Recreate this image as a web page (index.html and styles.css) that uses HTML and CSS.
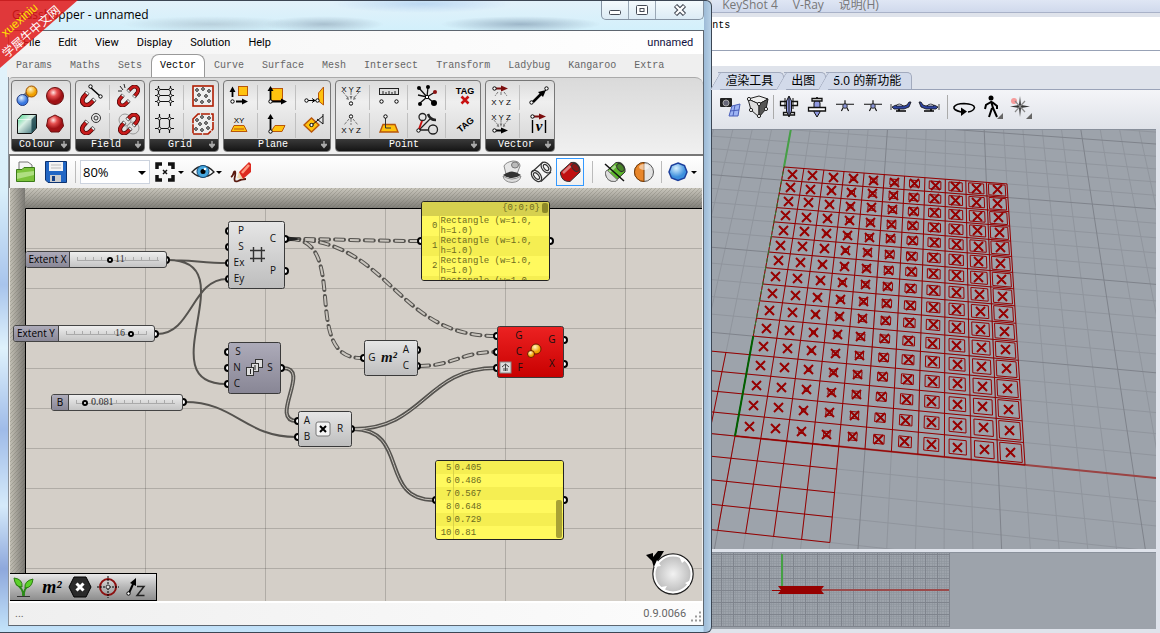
FILE: index.html
```html
<!DOCTYPE html>
<html lang="zh-CN">
<head>
<meta charset="utf-8">
<title>Grasshopper - unnamed</title>
<link rel="stylesheet" href="styles.css">
</head>
<body>
<svg class="defs" aria-hidden="true">
  <defs>
    <radialGradient id="gRed" cx=".4" cy=".3"><stop offset="0" stop-color="#ffe6e4"/><stop offset=".45" stop-color="#e65050"/><stop offset="1" stop-color="#a01216"/></radialGradient>
    <radialGradient id="gBlue" cx=".4" cy=".3"><stop offset="0" stop-color="#e4f2ff"/><stop offset="1" stop-color="#3a78e0"/></radialGradient>
    <radialGradient id="gGold" cx=".4" cy=".3"><stop offset="0" stop-color="#fff6c8"/><stop offset="1" stop-color="#f0a000"/></radialGradient>
    <radialGradient id="gSky" cx=".4" cy=".3"><stop offset="0" stop-color="#d8f2ff"/><stop offset="1" stop-color="#3c8fdd"/></radialGradient>
    <radialGradient id="gKnob"><stop offset="0" stop-color="#f2f2f2"/><stop offset="1" stop-color="#b9b9b9"/></radialGradient>
    <linearGradient id="gCube" x1="0" y1="0" x2="1" y2="1"><stop offset="0" stop-color="#46d488"/><stop offset=".4" stop-color="#d8efe4"/><stop offset="1" stop-color="#2b5f6a"/></linearGradient>
    <linearGradient id="gNode" x2="0" y2="1"><stop offset="0" stop-color="#e6e6e6"/><stop offset="1" stop-color="#bdbdbd"/></linearGradient>
    <linearGradient id="gMauve" x2="0" y2="1"><stop offset="0" stop-color="#adabb9"/><stop offset="1" stop-color="#888695"/></linearGradient>
    <linearGradient id="gErr" x2="0" y2="1"><stop offset="0" stop-color="#ec2222"/><stop offset="1" stop-color="#c80000"/></linearGradient>
    <linearGradient id="gTop" x2="0" y2="1"><stop offset="0" stop-color="#c9c6bc"/><stop offset="1" stop-color="#807e78"/></linearGradient>
    <linearGradient id="gSide"><stop offset="0" stop-color="#c2bfb4"/><stop offset="1" stop-color="#7c7a75"/></linearGradient>
    <pattern id="hatch" width="4" height="4" patternUnits="userSpaceOnUse"><path d="M-1 1L1-1M0 4L4 0M3 5L5 3" stroke="#605e55" stroke-opacity=".25"/></pattern>
    <pattern id="cells" x="25" y="208" width="120" height="40" patternUnits="userSpaceOnUse"><path d="M.5 0V40M0 .5H120" stroke="#000" stroke-opacity=".17" fill="none"/></pattern>
    <pattern id="mesh" x="721" y="554" width="12" height="12" patternUnits="userSpaceOnUse"><path d="M2.500 0V12M4.500 0V12M7.500 0V12M9.500 0V12M0 2.500H12M0 4.500H12M0 7.500H12M0 9.500H12" stroke="#8d949c" stroke-opacity=".6"/><path d="M.5 0V12M0 .5H12" stroke="#7f848d"/></pattern>
    <symbol id="magnet" viewBox="0 0 16 16"><g fill="none"><path d="M6.500 3L3.500 6.500Q.5 11 4 13.500Q7 15.500 10 12.500L13 9.500" stroke="#4a0606" stroke-width="4.400"/><path d="M6.500 3L3.500 6.500Q.5 11 4 13.500Q7 15.500 10 12.500L13 9.500" stroke="#c81c1c" stroke-width="2.800"/><path d="M5.800 3.800L7.300 2M12.200 10.300L14 8.500" stroke="#555" stroke-width="4.400"/><path d="M6.100 3.500L7 2.400M12.600 9.900L13.600 8.900" stroke="#fff" stroke-width="2.800"/></g></symbol>
    <symbol id="dot" viewBox="0 0 5 5"><circle cx="2.500" cy="2.500" r="1.700" fill="#fff" stroke="#000"/></symbol>
    <symbol id="fan" viewBox="0 0 20 9"><path d="M2 0L7 6M10 0V5M18 0L13 6" stroke="#777" stroke-dasharray="3 1" fill="none"/><path d="M5 7L8 8L7 4ZM8.500 4H11.500L10 8ZM15 7L12 8L13 4Z" fill="#777"/></symbol>
    <symbol id="pipe" viewBox="0 0 24 24"><path d="M2.500 12L13 2.500Q20 1 22 9V12L12 21.500Q4 22 2.500 14Z" fill="currentColor" stroke="#333"/><ellipse cx="17.500" cy="7.500" rx="3" ry="4.500" transform="rotate(-40 17.500 7.500)" fill="#222" fill-opacity=".35" stroke="#333"/><path d="M5 13L12.500 6" stroke="#fff" stroke-opacity=".45" stroke-width="2.500"/></symbol>
    <symbol id="planeSide" viewBox="0 0 22 12"><path d="M1 3V9M2 6Q8 2 14 5L17 4L19 1H21L19 6L14 8H4Z" fill="#2d43a0" stroke="#111" stroke-width=".8"/><path d="M6 5Q9 1 13 5Z" fill="#dfe4ff" stroke="#111" stroke-width=".7"/><path d="M6 10H16M9 8V10" stroke="#000" stroke-width="1.500"/></symbol>
    <symbol id="planeFront" viewBox="0 0 20 14"><path d="M0 4.500H20M10 0V4M6 12L8 8M14 12L12 8" stroke="#111" stroke-width="1.300"/><circle cx="10" cy="6.500" r="2.500" fill="#8a95d8" stroke="#222"/></symbol>
    <symbol id="more" viewBox="0 0 8 8"><path d="M4 0V5M1 3.500H7" stroke="#aaa" stroke-width="1.400"/><path d="M1 4H7L4 7.500Z" fill="#aaa"/></symbol>
  </defs>
</svg>

<div class="desktop">
  <main class="gh">
    <header class="caption">
      <h1>Grasshopper - unnamed</h1>
      <div class="winbtns">
        <button aria-label="Minimize"><svg width="14" height="12"><rect x="1.500" y="6.500" width="11" height="4" rx="1" fill="#fff" stroke="#444a55"/></svg></button>
        <button aria-label="Maximize"><svg width="14" height="12"><rect x="1.500" y="1.500" width="11" height="9" rx="1" fill="#fff" stroke="#444a55"/><rect x="5" y="4.500" width="4" height="3" fill="#fff" stroke="#444a55"/></svg></button>
        <button aria-label="Close" class="close"><svg width="14" height="12"><path d="M2.500 1.500L11.500 10.500M11.500 1.500L2.500 10.500" stroke="#444a55" stroke-width="4.500"/><path d="M3 2L11 10M11 2L3 10" stroke="#fff" stroke-width="2.400"/></svg></button>
      </div>
    </header>

    <div class="client">
      <nav class="menu">
        <a href="#">File</a><a href="#">Edit</a><a href="#">View</a><a href="#">Display</a><a href="#">Solution</a><a href="#">Help</a>
        <span class="doc">unnamed</span>
      </nav>
      <div class="tabs" role="tablist">
        <button role="tab">Params</button><button role="tab">Maths</button><button role="tab">Sets</button><button role="tab" class="on" aria-selected="true">Vector</button><button role="tab">Curve</button><button role="tab">Surface</button><button role="tab">Mesh</button><button role="tab">Intersect</button><button role="tab">Transform</button><button role="tab">Ladybug</button><button role="tab">Kangaroo</button><button role="tab">Extra</button>
      </div>

      <div class="ribbon">
        <section class="group colour">
          <div class="cells c2">
            <button aria-label="Blend colours"><svg viewBox="0 0 24 24"><path d="M7 16L16 7" stroke="#777" stroke-width="6"/><circle cx="7.500" cy="16" r="5.500" fill="url(#gBlue)" stroke="#223a80"/><circle cx="16.500" cy="7.500" r="5.500" fill="url(#gGold)" stroke="#9a4e00"/></svg></button>
            <button aria-label="Colour sphere"><svg viewBox="0 0 24 24"><circle cx="12" cy="12" r="8.500" fill="url(#gRed)" stroke="#6c1010"/></svg></button>
            <button aria-label="Colour cube"><svg viewBox="0 0 24 24"><path d="M2.500 7.500L7 2.500H21.500V16L16.500 21.500H2.500Z" fill="url(#gCube)" stroke="#111"/><path d="M16.500 21V7.500L21 3V16Z" fill="#123c44" fill-opacity=".75"/><path d="M3 7.500H16.500" stroke="#fff" stroke-opacity=".6"/></svg></button>
            <button aria-label="Colour polyhedron"><svg viewBox="0 0 24 24"><path d="M12 3L19 6.500L20.500 14L16 20H8L3.500 14L5 6.500Z" fill="url(#gRed)" stroke="#6c1010"/></svg></button>
          </div>
          <h2>Colour<svg><use href="#more"/></svg></h2>
        </section>
        <section class="group">
          <div class="cells c2 ruled">
            <button aria-label="Line charge"><svg viewBox="0 0 24 24"><use href="#magnet" x="1" y="6" width="17" height="17"/><path d="M11 3L21 12" stroke="#000" stroke-width="1.500"/><use href="#dot" x="9" y="0" width="5" height="5"/><use href="#dot" x="19" y="10" width="5" height="5"/></svg></button>
            <button aria-label="Break field"><svg viewBox="0 0 24 24"><use href="#magnet" x="0" y="9" width="14" height="14"/><use href="#magnet" x="9" y="0" width="14" height="14" transform="rotate(180 16 7.500)"/><path d="M3 2L6 6M7 0L8 4M1 7L5 7" stroke="#222"/></svg></button>
            <button aria-label="Point charge"><svg viewBox="0 0 24 24"><use href="#magnet" x="1" y="7" width="16" height="16"/><g fill="none" stroke="#333"><circle cx="17" cy="6" r="4.500"/><circle cx="17" cy="6" r="2"/></g></svg></button>
            <button aria-label="Merge fields"><svg viewBox="0 0 24 24"><g fill="none" stroke="#999"><circle cx="8" cy="8" r="6"/><circle cx="16" cy="16" r="6"/></g><use href="#magnet" x="1" y="8" width="15" height="15"/><use href="#magnet" x="8" y="1" width="15" height="15" transform="rotate(180 15.500 8.500)"/></svg></button>
          </div>
          <h2>Field<svg><use href="#more"/></svg></h2>
        </section>
        <section class="group">
          <div class="cells c2 ruled">
            <button aria-label="Rectangular grid"><svg viewBox="0 0 24 24"><path d="M2 5.500H21M2 11.500H21M2 17.500H21M5.500 2V22M17.500 2V22" stroke="#111" stroke-width="1.200"/><g fill="#fff" stroke="#222"><circle cx="5.500" cy="5.500" r="1.400"/><circle cx="17.500" cy="5.500" r="1.400"/><circle cx="5.500" cy="11.500" r="1.400"/><circle cx="17.500" cy="11.500" r="1.400"/><circle cx="5.500" cy="17.500" r="1.400"/><circle cx="17.500" cy="17.500" r="1.400"/></g></svg></button>
            <button aria-label="Populate 2D"><svg viewBox="0 0 24 24"><rect x="2" y="2" width="20" height="20" fill="#eee" stroke="#b01c00" stroke-width="1.600"/><g fill="#fff" stroke="#111"><circle cx="6" cy="6" r="1.300"/><circle cx="12" cy="5" r="1.300"/><circle cx="18" cy="7" r="1.300"/><circle cx="8" cy="11" r="1.300"/><circle cx="15" cy="12" r="1.300"/><circle cx="5" cy="16" r="1.300"/><circle cx="11" cy="18" r="1.300"/><circle cx="18" cy="17" r="1.300"/></g></svg></button>
            <button aria-label="Square grid"><svg viewBox="0 0 24 24"><path d="M2 6.500H21M2 16.500H21M6.500 2V21M16.500 2V21" stroke="#111" stroke-width="1.200"/><g fill="#fff" stroke="#222"><circle cx="6.500" cy="6.500" r="1.400"/><circle cx="16.500" cy="6.500" r="1.400"/><circle cx="6.500" cy="16.500" r="1.400"/><circle cx="16.500" cy="16.500" r="1.400"/></g></svg></button>
            <button aria-label="Populate 3D"><svg viewBox="0 0 24 24"><path d="M2 7L7 2H22V17L17 22H2Z" fill="#eee" stroke="#b01c00" stroke-width="1.600" stroke-dasharray="9 1"/><g fill="#fff" stroke="#111"><circle cx="6" cy="8" r="1.300"/><circle cx="11" cy="5" r="1.300"/><circle cx="18" cy="6" r="1.300"/><circle cx="9" cy="12" r="1.300"/><circle cx="15" cy="11" r="1.300"/><circle cx="5" cy="17" r="1.300"/><circle cx="11" cy="18" r="1.300"/><circle cx="17" cy="16" r="1.300"/></g></svg></button>
          </div>
          <h2>Grid<svg><use href="#more"/></svg></h2>
        </section>
        <section class="group">
          <div class="cells c3 ruled">
            <button aria-label="Align plane"><svg viewBox="0 0 24 24"><rect x="11.500" y="2.500" width="9" height="9" fill="#ffc20e" stroke="#b8560a"/><path d="M5.500 13V6M9 17.500H17" stroke="#000" stroke-width="1.800"/><path d="M2.500 8L5.500 2.500L8.500 8ZM15 14.500L21 17.500L15 20.500Z"/><use href="#dot" x="3" y="15" width="5" height="5"/></svg></button>
            <button aria-label="Construct plane"><svg viewBox="0 0 24 24"><rect x="5.500" y="4.500" width="12" height="12" fill="#ffc20e" stroke="#b8560a"/><path d="M5.500 17V6M6 17.500H18" stroke="#000" stroke-width="1.800"/><path d="M2.500 7L5.500 2L8.500 7ZM16 14.500L22 17.500L16 20.500Z"/><use href="#dot" x="3" y="15" width="5" height="5"/></svg></button>
            <button aria-label="Plane normal"><svg viewBox="0 0 24 24"><path d="M15.500 9L20.500 3V21L15.500 17Z" fill="#ffc20e" stroke="#b8560a"/><path d="M4 16.500H14M9 14.500L12 16.500L9 18.500" stroke="#000" fill="none"/><use href="#dot" x="1" y="14" width="5" height="5"/><use href="#dot" x="12" y="14" width="5" height="5"/></svg></button>
            <button aria-label="XY plane"><svg viewBox="0 0 24 24"><text x="12" y="11" class="ico">XY</text><path d="M4 19.500L7 13.500H17L20 19.500Z" fill="#ffc20e" stroke="#b8560a"/><path d="M7 17H17" stroke="#b8560a"/></svg></button>
            <button aria-label="Plane offset"><svg viewBox="0 0 24 24"><path d="M6 19.500L10 13.500H20L17 19.500Z" fill="#ffc20e" stroke="#b8560a"/><path d="M5.500 18V6" stroke="#000" stroke-width="1.800"/><path d="M2.500 7L5.500 2L8.500 7Z"/><use href="#dot" x="3" y="17" width="5" height="5"/></svg></button>
            <button aria-label="Rotate plane"><svg viewBox="0 0 24 24"><path d="M1 13L8.500 6L16 13L8.500 20Z" fill="#ffc20e" stroke="#b8560a" stroke-width="1.400"/><path d="M9 13L20 4M20 2V12L14 7" stroke="#111" fill="none"/><use href="#dot" x="6" y="10.500" width="5" height="5"/></svg></button>
          </div>
          <h2>Plane<svg><use href="#more"/></svg></h2>
        </section>
        <section class="group">
          <div class="cells c4 ruled">
            <button aria-label="Construct point"><svg viewBox="0 0 24 24"><text x="12" y="8" class="ico">X Y Z</text><use href="#fan" x="2" y="8" width="20" height="9"/><use href="#dot" x="9.500" y="17" width="5" height="5"/></svg></button>
            <button aria-label="Distance"><svg viewBox="0 0 24 24"><rect x="2.500" y="4.500" width="19" height="6" fill="#ddd" stroke="#222"/><path d="M6 10V7M9 10V8M12 10V7M15 10V8M18 10V7" stroke="#222"/><use href="#dot" x="2" y="15" width="5" height="5"/><use href="#dot" x="17" y="15" width="5" height="5"/></svg></button>
            <button aria-label="Closest points"><svg viewBox="0 0 24 24"><path d="M12 13L4 4M12 13L13 3M12 13L20 8M12 13L19 19M12 13L5 19M12 13L3 11" stroke="#111" stroke-width="1.300"/><circle cx="4" cy="4" r="2"/><circle cx="13" cy="3" r="2"/><circle cx="20" cy="8" r="2" fill="#8c1010"/><circle cx="19" cy="19" r="3"/><circle cx="5" cy="20" r="2"/><use href="#dot" x="9.500" y="10.500" width="5" height="5"/></svg></button>
            <button aria-label="Text tag"><svg viewBox="0 0 24 24"><text x="12" y="10" class="ico tag">TAG</text><path d="M8.500 12.500L15.500 19.500M15.500 12.500L8.500 19.500" stroke="#c81010" stroke-width="2.600"/></svg></button>
            <button aria-label="Deconstruct point"><svg viewBox="0 0 24 24"><use href="#dot" x="9.500" y="2" width="5" height="5"/><path d="M10 7L5 13M12 7V13M14 7L19 13" stroke="#777" stroke-dasharray="3 1"/><text x="12" y="21" class="ico">X Y Z</text></svg></button>
            <button aria-label="Project point"><svg viewBox="0 0 24 24"><path d="M3 20L6 12.500H18L21 20Z" fill="#ffc20e" stroke="#b8560a" stroke-width="1.400"/><path d="M8.500 5V16H14" stroke="#333" fill="none"/><use href="#dot" x="6" y="2" width="5" height="5"/></svg></button>
            <button aria-label="Pull point"><svg viewBox="0 0 24 24"><g fill="none" stroke="#222" stroke-width="1.300"><circle cx="7.500" cy="5" r="3.500"/><circle cx="18" cy="17.500" r="4.500"/><path d="M13 2Q15 8 21 8" stroke-width="2.500"/><path d="M4 18L15 7M4 18H13"/></g><path d="M4 17L7 9" stroke="#c81010" stroke-width="2"/><use href="#dot" x="1" y="16" width="5" height="5"/></svg></button>
            <button aria-label="Text tag 3D"><svg viewBox="0 0 24 24"><text x="12" y="16" class="ico tag" transform="rotate(-40 12 12)">TAG</text></svg></button>
          </div>
          <h2>Point<svg><use href="#more"/></svg></h2>
        </section>
        <section class="group">
          <div class="cells c2 ruled">
            <button aria-label="Deconstruct vector"><svg viewBox="0 0 24 24"><path d="M6 4.500H13" stroke="#7c0e0e" stroke-width="2"/><path d="M12 1.500L19 4.500L12 7.500Z" fill="#7c0e0e"/><use href="#dot" x="3" y="2" width="5" height="5"/><path d="M9 8L6 12M12 8V12M15 8L18 12" stroke="#777" stroke-dasharray="3 1"/><text x="12" y="21" class="ico">X Y Z</text></svg></button>
            <button aria-label="Vector two points"><svg viewBox="0 0 24 24"><path d="M6 18L14 10" stroke="#000" stroke-width="2.500"/><path d="M11 8L19 6L16 13Z"/><path d="M17 8L20 5" stroke="#000"/><use href="#dot" x="2" y="16" width="5" height="5"/><use href="#dot" x="17" y="2" width="5" height="5"/></svg></button>
            <button aria-label="Vector XYZ"><svg viewBox="0 0 24 24"><text x="12" y="8" class="ico">X Y Z</text><use href="#fan" x="2" y="8" width="20" height="8"/><path d="M6 18.500H13" stroke="#000" stroke-width="2"/><path d="M12 15.500L19 18.500L12 21.500Z"/><use href="#dot" x="3" y="16" width="5" height="5"/></svg></button>
            <button aria-label="Vector length"><svg viewBox="0 0 24 24"><path d="M6 4.500H13" stroke="#7c0e0e" stroke-width="2"/><path d="M12 1.500L19 4.500L12 7.500Z" fill="#7c0e0e"/><use href="#dot" x="3" y="2" width="5" height="5"/><path d="M5.500 8V21M18.500 8V21" stroke="#000" stroke-width="1.400"/><text x="12" y="19" class="ico vee">v</text></svg></button>
          </div>
          <h2>Vector<svg><use href="#more"/></svg></h2>
        </section>
      </div>

      <div class="tools">
        <button aria-label="Open"><svg viewBox="0 0 24 24"><path d="M5 12V2H14L18 5V12Z" fill="#f4f4f4" stroke="#777"/><path d="M2.500 21.500V9.500H8L10 7.500H20.500V21.500Z" fill="#7cc33c" stroke="#3a7a18"/><path d="M3 13L20 11V15L3 19Z" fill="#d2f2b0" fill-opacity=".6"/></svg></button>
        <button aria-label="Save"><svg viewBox="0 0 24 24"><path d="M1.500 1.500H22.500V22.500H4L1.500 20Z" fill="#2166c4" stroke="#0c3270"/><rect x="5" y="2" width="14" height="9" fill="#f4f4f4"/><path d="M7 5H17M7 8H17" stroke="#bbb"/><rect x="6" y="15" width="11" height="7" fill="#ccc"/><rect x="8" y="16" width="3" height="5" fill="#123e86"/></svg></button>
        <hr>
        <div class="zoom"><select aria-label="Zoom"><option>80%</option></select></div>
        <button aria-label="Zoom extents"><svg viewBox="0 0 24 24"><path d="M4 9V4H9M15 4H20V9M20 15V20H15M9 20H4V15" fill="none" stroke="#111" stroke-width="3.500"/><path d="M10 10L14 14M14 10L10 14" stroke="#111" stroke-width="1.500"/></svg></button>
        <button class="drop" aria-label="Zoom options"></button>
        <button aria-label="Preview"><svg viewBox="0 0 24 24"><path d="M1 12Q12 0 23 12Q12 22 1 12Z" fill="#f4f8fa" stroke="#222" stroke-width="1.300"/><circle cx="12" cy="11.500" r="6" fill="#46a8e0" stroke="#144a78"/><circle cx="12" cy="11.500" r="2.500"/><circle cx="14" cy="9" r="1.300" fill="#fff"/></svg></button>
        <button class="drop" aria-label="Preview options"></button>
        <button aria-label="Sketch"><svg viewBox="0 0 24 24"><path d="M2 17Q4 16 5 12Q7 10 6 16Q4 23 9 21Q12 19 17 19" fill="none" stroke="#5a1a10" stroke-width="1.800"/><path d="M10 12L20 2L22 4V12L14 19Q9 17 10 12Z" fill="#dd2a20"/><path d="M10 12L8 18L14 19Z" fill="#f0d8b0"/><path d="M13 13L20 5" stroke="#ff9a80" stroke-width="2.500"/></svg></button>
        <span class="fill"></span>
        <button aria-label="No preview" class="wide"><svg viewBox="0 0 24 24"><path d="M4 6Q6 2 13 1Q20 1 20 6L17 14H6Z" fill="#e6e6e6" stroke="#888"/><ellipse cx="15" cy="5" rx="3.500" ry="3" fill="#bbb" stroke="#777"/><path d="M3 15Q12 8 21 15Q12 21 3 15Z" fill="#333"/><path d="M3 16Q12 22 21 16Q20 22 12 22.500Q4 22 3 16Z" fill="#ddd" stroke="#777" stroke-width=".8"/></svg></button>
        <button aria-label="Wireframe preview" class="wide"><svg viewBox="0 0 24 24"><g fill="none" stroke="#333" stroke-width="1.200"><path d="M3 12L14 2M12 21.500L22 12"/><ellipse cx="7.500" cy="16" rx="4" ry="6.500" transform="rotate(-40 7.500 16)"/><ellipse cx="17" cy="7.500" rx="4" ry="6" transform="rotate(-40 17 7.500)"/><ellipse cx="7.500" cy="16" rx="2" ry="4" transform="rotate(-40 7.500 16)"/><ellipse cx="17" cy="7.500" rx="2" ry="3.500" transform="rotate(-40 17 7.500)"/></g></svg></button>
        <button aria-label="Shaded preview" class="wide picked red"><svg><use href="#pipe"/></svg></button>
        <hr class="roomy">
        <button aria-label="Selected only" class="wide green"><svg viewBox="0 0 24 24"><use href="#pipe" width="24" height="24"/><path d="M2.500 12L4 10L14.500 20L12 21.500Q4 22 2.500 14Z" fill="#ddd" stroke="#777"/><path d="M2 4L21 21" stroke="#111" stroke-width="1.500"/></svg></button>
        <button aria-label="Document preview" class="wide"><svg viewBox="0 0 24 24"><circle cx="12" cy="12" r="9.500" fill="#e2e2e2" stroke="#555"/><path d="M12 2.500A9.500 9.500 0 0 0 12 21.500Z" fill="#e8862a" stroke="#7a3a00"/><ellipse cx="12" cy="7" rx="5" ry="3" fill="#fff" fill-opacity=".5"/></svg></button>
        <hr class="tight">
        <button aria-label="Mesh quality"><svg viewBox="0 0 24 24"><path d="M12 3L18.500 5.500L21 12L18.500 18L12 20.500L5.500 18L3 12L5.500 5.500Z" fill="url(#gSky)" stroke="#1c3f9c" stroke-width="1.500"/></svg></button>
        <button class="drop last" aria-label="Mesh options"></button>
      </div>

      <div class="canvas">
        <svg class="sheet" aria-hidden="true">
          <g transform="translate(-10 -188)">
            <rect width="3000" height="3000" fill="url(#cells)"/>
            <rect y="188" width="3000" height="20" fill="url(#gTop)"/><rect x="10" y="188" width="15" height="3000" fill="url(#gSide)"/>
            <path d="M0 188H3000V208H25V3000H0Z" fill="url(#hatch)"/>
            <path d="M3000 208.500H25.500V3000" fill="none" stroke="#000"/>
            <g class="wire"><path d="M168 260C190 260 205 263 227 263M168 260C248 260 147 384 226 384M157 334C192 334 192 279 227 279M185 402C235 402 245 437 296 437"/></g>
            <g class="wire list"><path id="wl" d="M283 368C312 368 268 421 297 421M353 429C425 429 425 368 496 368M353 429C410 429 378 500 434 500"/></g>
            <use href="#wl" class="core"/>
            <g class="wire tree"><path id="wt" d="M290 239C335 239 370 241 419 241M290 239C390 239 395 336 495 336M290 239C350 239 300 358 361 358M420 366C452 366 462 352 495 352"/></g>
            <use href="#wt" class="core tree"/>
            <path d="M288 236.500L302 239L288 241.500" fill="#222"/>
            <g class="port"><circle cx="166" cy="260" r="3"/><circle cx="155" cy="334" r="3"/><circle cx="183" cy="402" r="3"/><circle cx="229" cy="231" r="3"/><circle cx="229" cy="247" r="3"/><circle cx="229" cy="263" r="3"/><circle cx="229" cy="279" r="3"/><circle cx="285" cy="239" r="3"/><circle cx="285" cy="271" r="3"/><circle cx="228" cy="352" r="3"/><circle cx="228" cy="368" r="3"/><circle cx="228" cy="384" r="3"/><circle cx="281" cy="368" r="3"/><circle cx="298" cy="421" r="3"/><circle cx="298" cy="437" r="3"/><circle cx="351" cy="429" r="3"/><circle cx="364" cy="358" r="3"/><circle cx="417" cy="350" r="3"/><circle cx="417" cy="366" r="3"/><circle cx="497" cy="336" r="3"/><circle cx="497" cy="352" r="3"/><circle cx="497" cy="368" r="3"/><circle cx="564" cy="340" r="3"/><circle cx="564" cy="364" r="3"/><circle cx="421" cy="241" r="3"/><circle cx="550" cy="241" r="3"/><circle cx="436" cy="500" r="3"/><circle cx="564" cy="500" r="3"/></g>
            <g class="node">
              <rect x="228.500" y="221.500" width="56" height="67" rx="2" fill="url(#gNode)"/>
              <rect x="228.500" y="342.500" width="52" height="51" rx="2" fill="url(#gMauve)"/>
              <rect x="298.500" y="411.500" width="53" height="35" rx="2" fill="url(#gNode)"/>
              <rect x="364.500" y="340.500" width="53" height="35" rx="2" fill="url(#gNode)"/>
              <rect x="497.500" y="326.500" width="66" height="51" rx="2" fill="url(#gErr)"/>
            </g>
            <g class="pin">
              <text x="241" y="234">P</text><text x="241" y="250">S</text><text x="239" y="266">Ex</text><text x="239" y="282">Ey</text><text x="273" y="242">C</text><text x="273" y="274">P</text>
              <text x="238" y="355">S</text><text x="237" y="371">N</text><text x="237" y="387">C</text><text x="270" y="371">S</text>
              <text x="307" y="424">A</text><text x="307" y="440">B</text><text x="340" y="432">R</text>
              <text x="372" y="361">G</text><text x="406" y="353">A</text><text x="406" y="369">C</text>
              <text x="519" y="339">G</text><text x="519" y="355">C</text><text x="520" y="371">F</text><text x="552" y="343">G</text><text x="552" y="367">X</text>
              <text x="389" y="362" class="msq">m²</text>
            </g>
            <path d="M250 250.500H265M250 258.500H265M253.500 247V262M261.500 247V262" stroke="#333" stroke-width="1.400"/>
            <g fill="#ddd" stroke="#333"><rect x="255.500" y="359.500" width="7" height="8"/><rect x="251.500" y="363.500" width="7" height="8"/><rect x="246.500" y="367.500" width="7" height="8"/></g>
            <path d="M250.500 369V374M255 365V370" stroke="#222"/>
            <rect x="316" y="422" width="14" height="14" rx="2" fill="#f4f4f4" stroke="#777"/><path d="M320 426L326 432M326 426L320 432" stroke="#000" stroke-width="2"/>
            <circle cx="536" cy="349" r="5" fill="url(#gGold)" stroke="#6a1800"/><circle cx="531" cy="354" r="3.500" fill="url(#gGold)" stroke="#6a1800"/>
            <rect x="500" y="362" width="11" height="11" fill="#ddd" stroke="#888"/><path d="M505.500 371V364M502 367L505.500 364L509 367M504 371V368M507 371V368" fill="none" stroke="#444"/>
          </g>
        </svg>

        <div class="slider sx"><label for="ex">Extent X</label><span><input id="ex" type="range" min="0" max="75" value="30"><output>11</output></span></div>
        <div class="slider sy"><label for="ey">Extent Y</label><span><input id="ey" type="range" min="0" max="75" value="62"><output>16</output></span></div>
        <div class="slider sb"><label for="bb">B</label><span><input id="bb" type="range" min="0" max="93" value="6"><output>0.081</output></span></div>

        <div class="panel p1">
          <div class="path">{0;0;0}</div>
          <table>
            <tr><th>0</th><td>Rectangle (w=1.0, h=1.0)</td></tr>
            <tr><th>1</th><td>Rectangle (w=1.0, h=1.0)</td></tr>
            <tr><th>2</th><td>Rectangle (w=1.0, h=1.0)</td></tr>
            <tr><th></th><td>Rectangle (w=1.0,</td></tr>
          </table>
        </div>
        <div class="panel p2">
          <table>
            <tr><th>5</th><td>0.405</td></tr><tr><th>6</th><td>0.486</td></tr><tr><th>7</th><td>0.567</td></tr><tr><th>8</th><td>0.648</td></tr><tr><th>9</th><td>0.729</td></tr><tr><th>10</th><td>0.81</td></tr>
          </table>
        </div>

        <div class="recent">
          <button aria-label="Sprout"><svg viewBox="0 0 24 24"><path d="M11 21Q12 14 4 9M12 21Q11 14 18 9" fill="none" stroke="#2a8a18" stroke-width="2"/><path d="M2 3Q11 4 10 12Q3 12 2 3ZM21 4Q12 6 13 13Q20 13 21 4Z" fill="#5cd02a" stroke="#2a7a10"/><path d="M5 21.500H18" stroke="#333"/></svg></button>
          <button aria-label="Area" class="m2">m²</button>
          <button aria-label="Multiply"><svg viewBox="0 0 24 24"><path d="M1 12L6 2H18L23 12L18 22H6Z" fill="#2a2a2a" stroke="#000"/><path d="M8.500 8.500L15.500 15.500M15.500 8.500L8.500 15.500" stroke="#fff" stroke-width="3"/></svg></button>
          <button aria-label="Target"><svg viewBox="0 0 24 24"><circle cx="12" cy="12" r="8" fill="none" stroke="#8c1010" stroke-width="2"/><path d="M12 1V23M1 12H23" stroke="#000" stroke-dasharray="2 1"/><circle cx="12" cy="12" r="2" fill="#ddd" stroke="#333"/></svg></button>
          <button aria-label="Unit Z"><svg viewBox="0 0 24 24"><path d="M5 18L10 7" stroke="#000" stroke-width="2"/><path d="M6 8L12 3L12 11Z"/><use href="#dot" x="2" y="16" width="5" height="5"/><path d="M13 11.500H20L13 20.500H20.500" fill="none" stroke="#222" stroke-width="1.500"/></svg></button>
        </div>
        <svg class="compass" viewBox="0 0 50 50" aria-hidden="true"><path d="M2 7L9 5V9L14 3L20 3L10 20L8 13Z"/><circle cx="29" cy="26" r="20" fill="url(#gKnob)" stroke="#222" stroke-width="1.500"/><circle cx="29" cy="26" r="18.500" fill="none" stroke="#fff" stroke-width="2"/><path d="M10 19L17 18L13 12ZM35 8L38 15L42 12ZM20 43L23 38L17 39ZM47 32L41 35L45 38Z" fill="#fff"/></svg>
      </div>

      <footer class="status"><span class="dash">...</span><span>0.9.0066</span><svg width="12" height="12"><path d="M9 1.500H11M9 5.500H11M5 5.500H7M9 9.500H11M5 9.500H7M1 9.500H3" stroke="#999" stroke-width="2"/></svg></footer>
    </div>
  </main>

  <aside class="rhino">
    <nav class="rmenu"><a href="#">KeyShot 4</a><a href="#">V-Ray</a><a href="#">说明(H)</a></nav>
    <div class="history">nts</div>
    <div class="prompt"></div>
    <div class="rtabs" role="tablist"><button role="tab">渲染工具</button><button role="tab">出图</button><button role="tab">5.0 的新功能</button></div>
    <div class="rtools">
      <button aria-label="Camera"><svg viewBox="0 0 24 24"><rect x="2" y="3" width="12" height="9" rx="1" fill="#222"/><circle cx="8" cy="8" r="3" fill="#667" stroke="#aaa"/><path d="M14 11L22 9L20 21H11Z" fill="#9db4f4" stroke="#4a5eb8"/><path d="M12 16L21 15M17 10L15 21" stroke="#4a5eb8"/></svg></button>
      <button aria-label="Named views"><svg viewBox="0 0 24 24"><path d="M2 4L13 1L22 4L13 9Z" fill="#eee" stroke="#222"/><path d="M2 4L13 9V22L5 15Z" fill="#ddd" stroke="#222"/><path d="M22 4L13 9V22L20 14Z" fill="#555" stroke="#222"/><g fill="#fff" stroke="#222"><circle cx="3" cy="4" r="1.600"/><circle cx="13" cy="9" r="1.600"/><circle cx="13" cy="21" r="1.600"/><circle cx="5" cy="15" r="1.600"/><circle cx="20" cy="14" r="1.600"/></g></svg></button>
      <hr>
      <button aria-label="Top view"><svg viewBox="0 0 24 24"><path d="M3.500 6.500H20.500V10.500H3.500ZM6.500 17.500H17.500V20H6.500Z" fill="#fff" stroke="#111" stroke-width="1.300"/><path d="M12 1L14.500 6V16L12 22L9.500 16V6Z" fill="#8f98e0" stroke="#111"/><path d="M12 2V21M8 3V14M16 3V14" stroke="#111"/></svg></button>
      <button aria-label="Bottom view"><svg viewBox="0 0 24 24"><path d="M12 2L15 8V17L12 22L9 17V8Z" fill="#8f98e0" stroke="#111"/><path d="M3.500 12.500H20.500V16H3.500ZM7 3.500H17V6H7Z" fill="#fff" stroke="#111" stroke-width="1.300"/></svg></button>
      <button aria-label="Front view"><svg viewBox="0 0 24 24"><use href="#planeFront" x="3" y="5" width="18" height="13"/></svg></button>
      <button aria-label="Back view"><svg viewBox="0 0 24 24"><use href="#planeFront" x="3" y="5" width="18" height="13"/></svg></button>
      <button aria-label="Right view"><svg viewBox="0 0 24 24"><use href="#planeSide" x="1" y="6" width="22" height="12"/></svg></button>
      <button aria-label="Left view"><svg viewBox="0 0 24 24"><use href="#planeSide" x="1" y="6" width="22" height="12" transform="matrix(-1 0 0 1 24 0)"/></svg></button>
      <hr class="roomy">
      <button aria-label="Rotate view"><svg viewBox="0 0 24 24"><path d="M9 17Q1 15 2 12Q4 8.500 12 8.500Q22 9 22.500 12.500Q22 16 16 17" fill="none" stroke="#000" stroke-width="1.600"/><path d="M9 12.500L15 16.500L9 21Z"/></svg></button>
      <button aria-label="Walk"><svg viewBox="0 0 24 24"><circle cx="11" cy="3" r="2.500"/><path d="M11 6L13 13L17 22M12 13L9 22M11 7L6 10L5 14M12 7L17 11V14" fill="none" stroke="#000" stroke-width="2"/><path d="M23 18V24H17Z" fill="#666"/></svg></button>
      <button aria-label="Compass view"><svg viewBox="0 0 24 24"><circle cx="6" cy="6" r="3" fill="#f69a9a"/><path d="M12 1L13 10L22 11.500L13 13L12 22L11 13L2 11.500L11 10Z" fill="#333"/><path d="M7 6L17 17M17 6L7 17" stroke="#888" stroke-width="1.200"/><path d="M24 18V24H18Z" fill="#666"/></svg></button>
    </div>
    <svg class="view persp" role="img" aria-label="Perspective viewport"><g id="scene" transform="translate(-712 -130)"></g></svg>
    <svg class="view front" role="img" aria-label="Front viewport"><g transform="translate(-712 -553)">
      <rect x="700" y="553" width="250" height="74" fill="url(#mesh)"/>
      <path d="M782 554V588" stroke="#45a045" stroke-width="2"/><path d="M772 590.500H790" stroke="#960000"/><path d="M820 590H949" stroke="#9b4b4b" stroke-width="2"/>
      <path d="M778 586H824L821 590L824 594H778L781 590Z" fill="#960000"/>
    </g></svg>
  </aside>

  <svg class="ribbonmark" viewBox="0 0 80 70"><path d="M0 0H78L0 68Z" fill="#e01818" fill-opacity=".85"/><text transform="translate(22 23) rotate(-41)" class="en">xuexiniu</text><text transform="translate(34 35) rotate(-41)" class="zh">学犀牛中文网</text></svg>
</div>
<script src="scene.js"></script>
</body>
</html>
```

FILE: styles.css
```css
* { box-sizing: border-box; }
body { margin: 0; font: 11px/14px Roboto, "Liberation Sans", sans-serif; color: #000; background: #dfe2ea; overflow: hidden; }
button { border: 0; padding: 0; margin: 0; background: none; font: inherit; color: inherit; display: grid; place-items: center; }
a { color: inherit; text-decoration: none; }
svg { display: block; }
.defs { position: absolute; width: 0; height: 0; }
.desktop { position: relative; display: grid; grid-template-columns: 61.4% minmax(0, 1fr); height: 100vh; }

/* Grasshopper window */
.gh { display: flex; flex-direction: column; min-width: 0; padding: 0 7px 6px 8px; border: 1px solid #3c4654; border-left: 0; border-radius: 0 6px 6px 0;
  background: linear-gradient(90deg, transparent 8px, transparent calc(100% - 8px), #9dbad6 calc(100% - 7px), #b7d0e6), linear-gradient(180deg, #e6f4fb 0, #d9effa 30%, #a8c4ec 45%, #dff2fc 55%, #9fbbe8 68%, #d5eafa 80%, #8ea8dc 90%, #c4e4fa 100%); }
.caption { display: flex; justify-content: space-between; align-items: flex-start; height: 29px;
  margin-left: -8px; padding-left: 12px; background: radial-gradient(ellipse 60px 8px at 46% 80%, #a9c0cf 0, transparent 100%), radial-gradient(ellipse 80px 8px at 74% 80%, #9db6c8 0, transparent 100%), radial-gradient(ellipse 90px 9px at 60% 10%, #bcd8f2 0, transparent 100%), radial-gradient(ellipse 90px 8px at 30% 80%, #b9d0dc 0, transparent 100%), linear-gradient(#e2f1fa, #d3f0fb); }
.caption h1 { margin: 6px 0 0; font: 12px/16px "Open Sans", sans-serif; }
.winbtns { display: flex; border: 1px solid #8593a3; border-top: 0; border-radius: 0 0 5px 5px; background: linear-gradient(#f4fafd, #dcebf5); }
.winbtns button { width: 27px; height: 18px; border-right: 1px solid #9aa7b5; }
.winbtns .close { width: 47px; border-right: 0; }
.client { flex: 1; display: flex; flex-direction: column; min-height: 0; border: 1px solid #5d6670; border-left-color: #8a9199; background: #f0f0f0; }
.menu { display: flex; gap: 18px; align-items: center; height: 23px; padding: 0 10px 0 14px; background: linear-gradient(90deg, #f4f4f4, #fff); }
.menu .doc { margin-left: auto; color: #101040; }
.tabs { display: flex; height: 23px; margin-left: -2px; background: #efefef; font: 10px/23px "Liberation Mono", monospace; color: #666; }
.tabs button { padding: 0 9px; }
.tabs .on { color: #000; background: #fff; border: 1px solid #999; border-bottom: 0; border-radius: 8px 8px 0 0; padding: 0 8px; line-height: 18px; }
.ribbon { display: flex; gap: 4px; align-items: flex-start; height: 77px; padding: 2px; border-top: 1px solid #aaa; border-radius: 4px 8px 0 0; background: linear-gradient(#dadada, #f0f0f0); }
.group { border: 1px solid #777; border-radius: 4px; overflow: hidden; background: linear-gradient(#dcdcdc, #efefef 30%, #d2d2d2); }
.cells { display: grid; grid-auto-rows: 28px; gap: 0 14px; height: 58px; padding: 1px 3px 0; }
.c2 { grid-template-columns: 24px 24px; }
.c3 { grid-template-columns: 24px 24px 24px; }
.c4 { grid-template-columns: 24px 24px 24px 24px; }
.colour .c2 { column-gap: 4px; }
.cells svg { width: 24px; height: 24px; }
.cells button { position: relative; }
.ruled button:not(:last-child)::after { content: ""; position: absolute; right: -7px; top: 3px; bottom: 0; border-right: 1px solid #c0c0c0; }
.ruled.c2 button:nth-child(2)::after, .ruled.c3 button:nth-child(3)::after, .ruled.c4 button:nth-child(4)::after { display: none; }
.group h2 { display: flex; justify-content: center; position: relative; margin: 0; height: 12px; padding-right: 8px; background: linear-gradient(#3a3a3a, #151515); color: #fff; font: 10px/11px "Liberation Mono", monospace; }
.group h2 svg { position: absolute; right: 2px; top: 2px; width: 8px; height: 8px; }
.ico { font: 8px "Liberation Sans", sans-serif; text-anchor: middle; }
.ico.tag { font: bold 9px "Liberation Sans", sans-serif; }
.ico.vee { font: italic bold 15px "Liberation Serif", serif; }

.tools { display: flex; align-items: center; height: 34px; padding: 0 3px 0 4px; border-top: 2px solid #777; border-left: 1px solid #777; background: linear-gradient(#fff, #efefef); }
.tools button { width: 24px; height: 24px; }
.tools button + button { margin-left: 6px; }
.tools svg { width: 24px; height: 24px; }
.tools hr { width: 1px; height: 22px; margin: 0 4px 0 7px; border: 0; background: #bbb; }
.tools .roomy { margin: 0 7px 0 8px; }
.tools .tight { margin: 0 4px 0 3px; }
.tools .fill { flex: 1; }
.tools button.drop { width: 6px; height: 3px; margin: 0 6px 0 1px; border: 3px solid transparent; border-top-color: #000; border-bottom: 0; }
.tools button.last { margin-right: 3px; }
.tools button.drop + button { margin-left: 1px; }
.tools button.wide { width: 28px; height: 28px; margin-left: 1px; }
.tools .picked { border: 1px solid #3399ff; }
.tools .red { color: #c01010; }
.tools .green { color: #5cb82c; }
.zoom { position: relative; width: 70px; height: 24px; margin-right: 3px; }
.zoom select { appearance: none; width: 100%; height: 100%; padding: 0 2px; border: 1px solid #ccd3de; background: #fff; font: 13px "Open Sans", sans-serif; }
.zoom::after { content: ""; position: absolute; right: 4px; top: 11px; border: 4px solid transparent; border-top-color: #000; border-bottom: 0; }

/* Canvas */
.canvas { position: relative; flex: 1; min-height: 0; margin: 0 1px; overflow: hidden; background: #d4cfc8; }
.sheet { position: absolute; inset: 0; width: 100%; height: 100%; }
.wire { fill: none; stroke: #55534f; stroke-width: 2; }
.wire.list { stroke-width: 4; }
.wire.tree { stroke-width: 4; stroke-dasharray: 9 6; stroke-linecap: round; }
.core { fill: none; stroke: #c8c4bd; stroke-width: 1; }
.core.tree { stroke-width: 2; stroke-dasharray: 9 6; }
.port { fill: #fff; stroke: #000; stroke-width: 2; }
.node { stroke: #3a3a3a; }
.pin { font: 10px "Open Sans", sans-serif; text-anchor: middle; fill: #111; }
.msq { font: italic bold 15px "Liberation Serif", serif; }

.slider { position: absolute; display: flex; height: 17px; border: 1px solid #444; border-radius: 3px; overflow: hidden; background: linear-gradient(#eee, #c4c4c4); }
.slider label { padding: 0 2px; border-right: 1px solid #444; background: linear-gradient(#aeacba, #898796); font: 10px/14px "Open Sans", sans-serif; white-space: nowrap; text-align: center; }
.slider span { position: relative; flex: 1; padding: 0 7px; }
.slider input { appearance: none; display: block; width: 100%; height: 15px; margin: 0; background: repeating-linear-gradient(90deg, #aaa 0 1px, transparent 1px 8px) 0 5px / 100% 4px no-repeat, linear-gradient(#aaa, #aaa) 0 8px / 100% 1px no-repeat; }
.slider input::-webkit-slider-thumb { appearance: none; width: 6px; height: 6px; border: 2px solid #000; border-radius: 50%; background: #fff; }
.slider output { position: absolute; left: 45px; top: 0; font: 10px/14px "Liberation Serif", serif; color: #333; }
.sx { left: 15px; top: 63px; width: 142px; } .sx label { width: 44px; }
.sy { left: 3px; top: 137px; width: 142px; } .sy label { width: 45px; } .sy output { left: 56px; }
.sb { left: 41px; top: 206px; width: 132px; } .sb label { width: 17px; } .sb output { left: 22px; }

.panel { position: absolute; height: 80px; width: 129px; overflow: hidden; border: 1px solid #222; border-radius: 3px; background: #fff95e; font: 9px/10px "Liberation Mono", monospace; color: #6c6a20; }
.p1 { left: 411px; top: 13px; }
.p2 { left: 425px; top: 272px; }
.panel table { width: 100%; border-collapse: collapse; }
.panel th, .panel td { padding: 0 1px; font-weight: normal; text-align: left; }
.panel th { width: 17px; text-align: right; border-right: 1px solid #d8d24a; }
.panel td { padding-right: 9px; }
.panel tr:nth-child(even) { background: #f5ee52; }
.p2 th, .p2 td { height: 13px; }
.p2 tr:nth-child(even) { background: none; }
.p2 tr:nth-child(odd) { background: #f5ee52; }
.path { height: 14px; padding: 1px 9px; text-align: right; background: #d6d04f; }
.p1::after, .p2::after { content: ""; position: absolute; right: 1px; width: 6px; border-radius: 2px; background: #8d8828; }
.p1::after { top: 1px; height: 10px; }
.p2::after { bottom: 1px; height: 38px; background: #a8a235; }

.recent { position: absolute; left: 0; bottom: 0; display: flex; gap: 4px; align-items: center; height: 28px; padding: 0 8px 0 2px; border: 1px solid #000; border-left: 0; background: linear-gradient(#e8e8e8, #bbb 45%, #8e8e8e); }
.recent svg, .recent button { width: 24px; height: 24px; }
.recent .m2 { font: italic bold 18px/20px "Liberation Serif", serif; }
.compass { position: absolute; right: 8px; bottom: 3px; width: 50px; height: 50px; }
.status { display: flex; align-items: center; gap: 4px; height: 24px; padding: 0 1px 0 6px; border-top: 2px solid #fff; background: linear-gradient(90deg, #efefef, #fcfcfc); font-size: 11px; color: #666; }
.status .dash { margin-right: auto; }
.status svg { margin-top: 6px; }

/* Rhino window */
.rhino { display: flex; flex-direction: column; min-width: 0; padding: 0 4px 4px 0; background: #dfe3eb; }
.rmenu { display: flex; gap: 15px; height: 13px; margin-right: -4px; padding-left: 10px; background: linear-gradient(#dfe6f4, #d0d9ec); border-bottom: 1px solid #a9b2c8; font: 12px/9px "Open Sans", "Noto Sans CJK SC", sans-serif; color: #777; }
.history { height: 34px; margin: 4px -4px 0 0; padding-top: 2px; background: #fff; border-bottom: 1px solid #98a2b6; font: 10px/14px "Liberation Mono", monospace; }
.prompt { height: 15px; margin-right: -4px; background: #fff; }
.rtabs { display: flex; height: 24px; align-items: flex-end; margin: 0 -4px 0 0; padding-left: 6px; border-top: 3px solid #dfe3eb; border-bottom: 1px solid #9aa3b8; font: 12px/16px "Liberation Sans", "Noto Sans CJK SC", sans-serif; }
.rtabs button { position: relative; height: 17px; padding: 0 10px 0 7px; border: 1px solid #a2aabd; border-width: 1px 1px 0 0; border-radius: 0 5px 0 0; background: #d2daea; }
/* slanted leading edge over the neighbouring tab */
.rtabs button::before { content: ""; position: absolute; z-index: 0; left: -3px; top: -1px; width: 9px; height: 17px; border: 1px solid #a2aabd; border-width: 1px 0 0 1px; border-radius: 2px 0 0 0; background: #d2daea; transform: skewX(-30deg); }
.rtools { display: flex; align-items: center; height: 39px; margin-right: -4px; padding: 0 4px 6px; background: linear-gradient(#f4f5f8, #dfe2e9); }
.rtools button { width: 28px; height: 28px; }
.rtools svg { width: 24px; height: 24px; }
.rtools hr { width: 1px; height: 24px; margin: 0 1px; border: 0; background: #aaa; }
.rtools .roomy { margin: 0 2px 0 4px; }
.view { width: 100%; background: #9da3ab; }
.persp { flex: 1; min-height: 0; border-top: 1px solid #888f9b; }
.front { height: 77px; margin-top: 3px; border-top: 1px solid #8a919b; }
.minor { stroke: #90959d; fill: none; }
.major { stroke: #7f838b; fill: none; }
.crv { stroke: #960000; fill: none; }
.mark { stroke: #960000; stroke-width: 2; fill: none; }

/* Corner ribbon lies over the window caption */
.ribbonmark { position: absolute; left: 0; top: 0; width: 80px; height: 70px; }
.ribbonmark text { text-anchor: middle; }
.en { font: 12px "Liberation Sans", sans-serif; fill: #ffe600; }
.zh { font: 12px "Noto Sans CJK SC", sans-serif; fill: #fff; }
```

FILE: scene.js
```js
// Perspective projection of the construction plane, in grid units.
function project(u, v) {
  const s = u / 11, t = v / 16;
  const w = 1 - 0.02465 * s + 0.29846 * t;
  return [(735 + 264.7 * s + 283 * t) / w, (436 + 17.5 * s - 219.2 * t) / w];
}
function path(points) {
  return "M" + points.map(([u, v]) => project(u, v).map(n => Math.round(n * 10) / 10).join(" ")).join("L");
}
const scene = document.getElementById("scene");
function add(d, cls, style) {
  const el = document.createElementNS("http://www.w3.org/2000/svg", "path");
  el.setAttribute("d", d);
  if (cls) el.setAttribute("class", cls);
  for (const key in style || {}) el.setAttribute(key, style[key]);
  scene.appendChild(el);
}

let minor = "", major = "";
for (let i = -15; i <= 35; i++) {
  const d = path([[i, -12], [i, 35]]) + path([[-15, i], [35, i]]);
  if (i % 5) minor += d; else major += d;
}
add(minor, "minor");
add(major, "major");
add(path([[0, 16], [0, 35]]), "", { stroke: "#45a045", "stroke-width": 2 });
add(path([[0, 0], [35, 0]]), "", { stroke: "#9b4444", "stroke-width": 2 });

let lines = "", marks = "";
for (let i = -4; i <= 4; i++) lines += path([[i, -4], [i, i < 0 ? 4 : 0]]) + path([[-4, i], [i > 0 ? 0 : 4, i]]);
for (let u = 0; u <= 11; u++) lines += path([[u, 0], [u, 16]]);
for (let v = 0; v <= 16; v++) lines += path([[0, v], [11, v]]);
for (let u = 0; u < 11; u++) {
  for (let v = 0; v < 16; v++) {
    const cx = u + 0.5, cy = v + 0.5, h = 0.081 * u / 2;
    if (u) lines += path([[cx - h, cy - h], [cx + h, cy - h], [cx + h, cy + h], [cx - h, cy + h]]) + "Z";
    const [x, y] = project(cx, cy).map(Math.floor);
    marks += `M${x - 4} ${y - 4}L${x + 5} ${y + 5}M${x + 5} ${y - 4}L${x - 4} ${y + 5}`;
  }
}
add(lines, "crv");
add(marks, "mark");
add(path([[0, 0], [0, 16]]), "", { stroke: "#2f7a2f", "stroke-dasharray": "5 3" });
add(path([[0, 0], [0, 5]]), "", { stroke: "#006000", "stroke-width": 2 });
```
